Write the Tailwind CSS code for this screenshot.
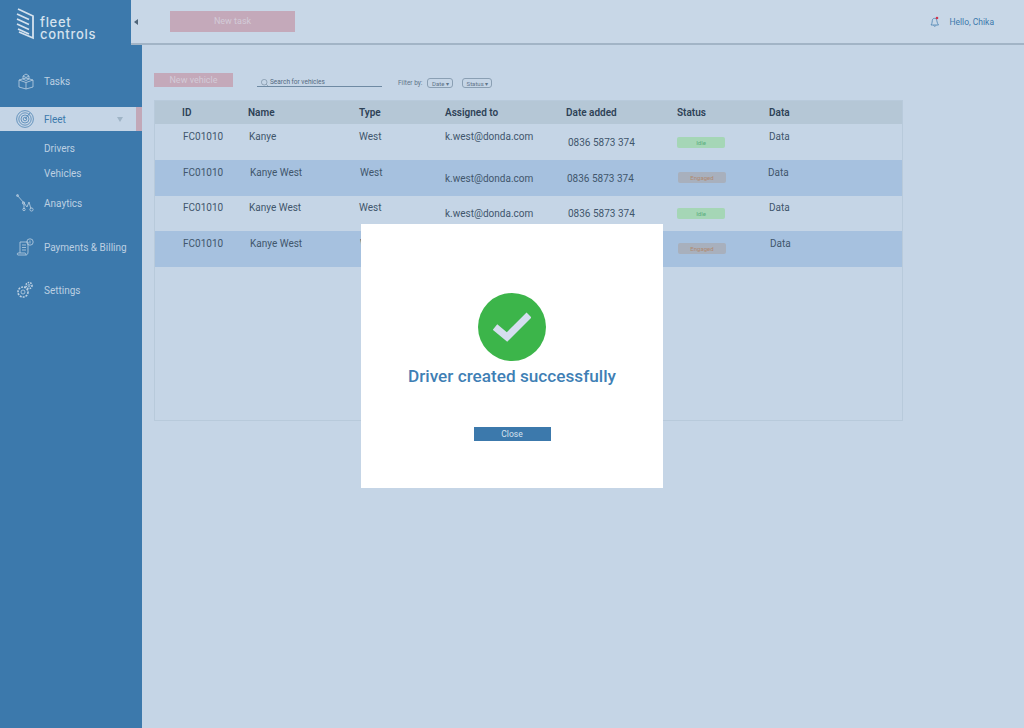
<!DOCTYPE html>
<html lang="en">
<head>
  <meta charset="UTF-8" />
  <meta name="viewport" content="width=device-width, initial-scale=1" />
  <title>Fleet Controls - Vehicles</title>
  <script src="https://cdn.jsdelivr.net/npm/@tailwindcss/browser@4"></script>
</head>
<body class="bg-[#c5d5e6] font-['Roboto',sans-serif]">
  <div class="relative flex h-[728px] w-[1024px] overflow-hidden">

    <!-- Sidebar -->
    <aside class="w-[142px] shrink-0 bg-[#3c79ac] text-[10px] text-[#bdd0e2]">
      <div class="flex h-[69px] items-start pl-4 pt-2">
        <svg class="h-[32px] w-[19px]" viewBox="0 0 19 32" fill="none" stroke="#d5e2ee" stroke-width="1.8">
          <path d="M2 1 L17 8 V30 L3 24" />
          <path d="M1 6 L13 11.5 M1 11 L13 16.5 M1 16 L13 21.5 M2 21 L13 26" />
        </svg>
        <div class="ml-[5px] mt-[9px] font-['Inter',sans-serif] text-[13px] font-medium leading-[11.5px] tracking-[0.7px] text-[#d5e2ee]">fleet<br />controls</div>
      </div>

      <div class="flex h-6 items-center">
        <svg class="ml-[18px] h-[17px] w-[16px]" viewBox="0 0 16 17" fill="none" stroke="#bdd0e2" stroke-width="0.8">
          <path d="M1 7 L8 5 L15 7 V14 L8 16 L1 14 Z M1 7 L8 9.5 L15 7 M8 9.5 V16" />
          <path d="M5 3 L8 1 L11 3 V6 L8 7.5 L5 6 Z M5 3 L8 4.5 L11 3" />
        </svg>
        <span class="ml-[10px]">Tasks</span>
      </div>

      <div class="mt-[14px] flex h-6 items-center bg-[#c5d5e6] text-[#3c79ac]">
        <svg class="ml-4 h-[18px] w-[18px]" viewBox="0 0 18 18" fill="none" stroke="#3c79ac" stroke-width="0.7">
          <circle cx="9" cy="9" r="8.4" />
          <circle cx="9" cy="9" r="6.2" />
          <circle cx="9" cy="9" r="4" />
          <circle cx="9" cy="9" r="1.8" />
          <path d="M9 9 L14 3" />
        </svg>
        <span class="ml-[10px]">Fleet</span>
        <span class="ml-[51px] h-0 w-0 border-x-[3px] border-t-[5px] border-x-transparent border-t-[#9fb4c6]"></span>
        <span class="ml-auto h-full w-[6px] bg-[#c2a8b8]"></span>
      </div>

      <div class="mt-[5px] flex h-6 items-center pl-11">Drivers</div>
      <div class="mt-px flex h-6 items-center pl-11">Vehicles</div>

      <div class="mt-[6px] flex h-6 items-center">
        <svg class="ml-4 h-[18px] w-[18px]" viewBox="0 0 18 18" fill="none" stroke="#bdd0e2" stroke-width="0.8">
          <path d="M1 1 L8 9 L8 15 M8 9 L11 13 L13 8 L15 15" />
          <circle cx="1.5" cy="1.5" r="1" />
          <circle cx="7.5" cy="9" r="1.2" />
          <circle cx="8" cy="15.5" r="1.2" />
          <circle cx="15.5" cy="15.5" r="1.6" />
        </svg>
        <span class="ml-[10px]">Anaytics</span>
      </div>

      <div class="mt-5 flex h-6 items-center">
        <svg class="ml-4 h-[18px] w-[18px]" viewBox="0 0 18 18" fill="none" stroke="#bdd0e2" stroke-width="0.8">
          <path d="M4 15 V4 H12 V14 C12 16 11 17 10 17 H2 C1 17 1 15 2 15 H9 C10 15 10 17 10 17" />
          <path d="M6 7 H10 M6 9.5 H10 M6 12 H10" />
          <circle cx="14" cy="4" r="3.2" />
          <path d="M14 2.5 V5.5" />
        </svg>
        <span class="ml-[10px]">Payments &amp; Billing</span>
      </div>

      <div class="mt-[19px] flex h-6 items-center">
        <svg class="ml-4 h-[18px] w-[18px]" viewBox="0 0 18 18" fill="none" stroke="#bdd0e2" stroke-width="0.8">
          <circle cx="7" cy="11" r="5" stroke-dasharray="2 1" stroke-width="1.6" />
          <circle cx="7" cy="11" r="2" />
          <circle cx="13" cy="4.5" r="3" stroke-dasharray="1.5 1" stroke-width="1.6" />
          <circle cx="13" cy="4.5" r="1" />
        </svg>
        <span class="ml-[10px]">Settings</span>
      </div>
    </aside>

    <!-- Main -->
    <main class="min-w-0 flex-1">
      <header class="relative -ml-[11px] flex h-[45px] items-center border-b-2 border-[#a2b4c6] bg-[#c8d7e7]">
        <span class="ml-[3px] h-0 w-0 border-y-[3.5px] border-r-[4px] border-y-transparent border-r-[#4f6478]"></span>
        <button class="ml-[32px] h-[21px] w-[125px] bg-[#c4a9ba] text-[9px] text-[#d3cbd8]">New task</button>
        <svg class="ml-auto h-[11px] w-[10px]" viewBox="0 0 10 11" fill="none" stroke="#3c79ac" stroke-width="0.7">
          <path d="M1 9 C2.5 7 2 5 2.5 3.5 C3 2 6 2 6.5 3.5 C7 5 7 7 8.5 9 Z" />
          <path d="M3.5 9.5 C4 10.5 5.5 10.5 6 9.5" />
          <circle cx="7" cy="2" r="1.3" fill="#d0364e" stroke="none" />
        </svg>
        <span class="ml-[9px] mr-[30px] pt-px text-[8.5px] text-[#3c79ac]">Hello, Chika</span>
      </header>

      <div class="pl-3">
        <div class="mt-[27px] flex h-[16px] items-end">
          <button class="mb-px h-[14px] w-[79px] bg-[#c4a9ba] text-[9px] leading-[14px] text-[#d3cbd8]">New vehicle</button>
          <div class="mb-px ml-6 flex h-[15px] w-[125px] items-center border-b border-[#6f8aa3] pl-1 pt-[7px]">
            <svg class="h-[8px] w-[8px]" viewBox="0 0 8 8" fill="none" stroke="#71869b" stroke-width="0.6">
              <circle cx="3.2" cy="3.2" r="2.8" />
              <path d="M5.2 5.2 L7.8 7.8" />
            </svg>
            <span class="ml-[1px] text-[6.5px] text-[#54697e]">Search for vehicles</span>
          </div>
          <span class="ml-4 text-[6.5px] leading-[9px] text-[#5f7488]">Filter by:</span>
          <span class="ml-[5px] flex h-[10px] w-[26px] items-center justify-center rounded-[3px] border border-[#8a9fb3] text-[6px] text-[#5f7488]">Date ▾</span>
          <span class="ml-[9px] flex h-[10px] w-[30px] items-center justify-center rounded-[3px] border border-[#8a9fb3] text-[6px] text-[#5f7488]">Status ▾</span>
        </div>

        <!-- Table -->
        <div class="mt-3 h-[321px] w-[749px] border border-[#b8cadb] text-[10px] leading-4 text-[#41566c]">
          <div class="flex h-[23px] items-center bg-[#b5c7d6] pl-[27px] font-semibold text-[#2e4256]">
            <span class="w-[66px]">ID</span>
            <span class="w-[111px]">Name</span>
            <span class="w-[86px]">Type</span>
            <span class="w-[121px]">Assigned to</span>
            <span class="w-[111px]">Date added</span>
            <span class="w-[92px]">Status</span>
            <span>Data</span>
          </div>

          <div class="flex h-[36px] items-start pl-[28px]">
            <span class="w-[66px] pt-[5px]">FC01010</span>
            <span class="w-[110px] pt-[5px]">Kanye</span>
            <span class="w-[86px] pt-[5px]">West</span>
            <span class="w-[123px] pt-[5px]">k.west@donda.com</span>
            <span class="w-[109px] pt-[11px]">0836 5873 374</span>
            <span class="w-[92px] pt-[13px]"><span class="flex h-[11px] w-[48px] items-center justify-center rounded-[2px] bg-[#a5d6b6] text-[6px] text-[#58ad7c]">Idle</span></span>
            <span class="pt-[5px]">Data</span>
          </div>

          <div class="flex h-[36px] items-start bg-[#a6c1df] pl-[28px]">
            <span class="w-[67px] pt-[5px]">FC01010</span>
            <span class="w-[110px] pt-[5px]">Kanye West</span>
            <span class="w-[85px] pt-[5px]">West</span>
            <span class="w-[122px] pt-[11px]">k.west@donda.com</span>
            <span class="w-[111px] pt-[11px]">0836 5873 374</span>
            <span class="w-[90px] pt-[12px]"><span class="flex h-[11px] w-[48px] items-center justify-center rounded-[2px] bg-[#a8b0bd] text-[6px] text-[#b08a70]">Engaged</span></span>
            <span class="pt-[5px]">Data</span>
          </div>

          <div class="flex h-[35px] items-start pl-[28px]">
            <span class="w-[66px] pt-1">FC01010</span>
            <span class="w-[110px] pt-1">Kanye West</span>
            <span class="w-[86px] pt-1">West</span>
            <span class="w-[123px] pt-[10px]">k.west@donda.com</span>
            <span class="w-[109px] pt-[10px]">0836 5873 374</span>
            <span class="w-[92px] pt-[12px]"><span class="flex h-[11px] w-[48px] items-center justify-center rounded-[2px] bg-[#a5d6b6] text-[6px] text-[#58ad7c]">Idle</span></span>
            <span class="pt-1">Data</span>
          </div>

          <div class="flex h-[36px] items-start bg-[#a6c1df] pl-[28px]">
            <span class="w-[67px] pt-[5px]">FC01010</span>
            <span class="w-[110px] pt-[5px]">Kanye West</span>
            <span class="w-[85px] pt-[5px]">West</span>
            <span class="w-[122px] pt-[11px]">k.west@donda.com</span>
            <span class="w-[111px] pt-[11px]">0836 5873 374</span>
            <span class="w-[92px] pt-[12px]"><span class="flex h-[11px] w-[48px] items-center justify-center rounded-[2px] bg-[#a8b0bd] text-[6px] text-[#b08a70]">Engaged</span></span>
            <span class="pt-[5px]">Data</span>
          </div>
        </div>
      </div>
    </main>

    <!-- Success modal -->
    <div class="absolute left-[361px] top-[224px] flex h-[264px] w-[302px] flex-col items-center bg-white">
      <div class="mt-[69px] flex h-[68px] w-[68px] items-center justify-center rounded-full bg-[#3cb54a]">
        <svg class="h-[30px] w-[38px]" viewBox="0 0 38 30" fill="none" stroke="#d5deef" stroke-width="7">
          <path d="M2 15 L14 25 L36 3" />
        </svg>
      </div>
      <h2 class="mt-[1px] text-[17.2px] font-medium leading-[28px] text-[#3f7fb5]">Driver created successfully</h2>
      <button class="mt-[37px] h-[14px] w-[77px] bg-[#3c79ac] text-[8.5px] leading-[14px] text-[#d5e2ee]">Close</button>
    </div>
  </div>
</body>
</html>
